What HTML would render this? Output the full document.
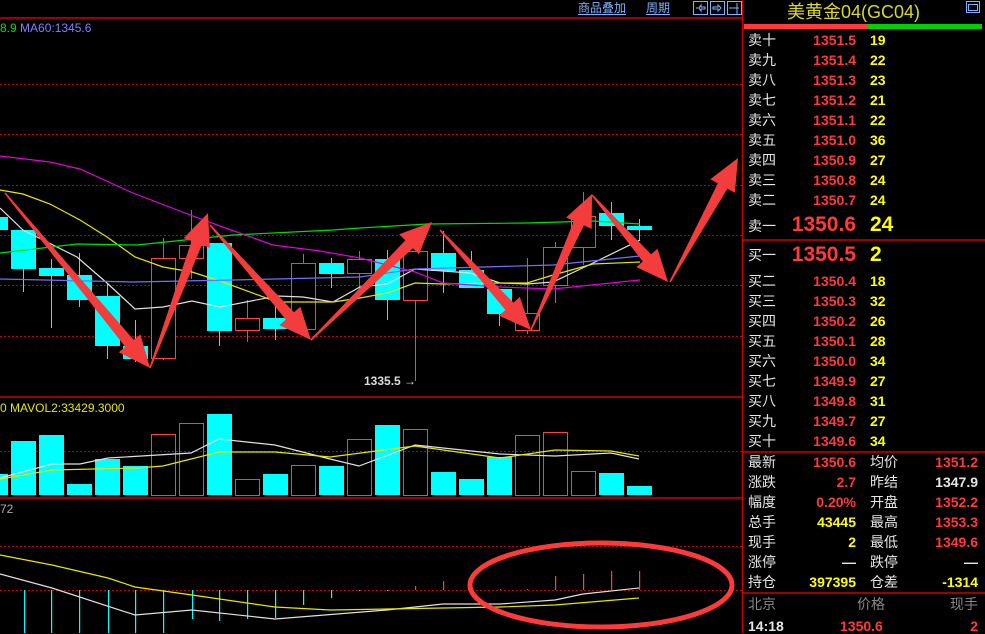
<!DOCTYPE html>
<html><head><meta charset="utf-8"><style>
body{margin:0;background:#000;width:985px;height:633px;overflow:hidden;position:relative;font-family:"Liberation Sans","Noto Sans CJK SC",sans-serif}
.t{position:absolute;white-space:nowrap;line-height:1}
.cn{font-size:14px;color:#e6e6e6}
.r{color:#ff3a3a}.y{color:#ffff00}.w{color:#e6e6e6}
.n{font-size:14px;font-weight:bold}
.ra{text-align:right}
</style></head><body>
<svg id="s" width="985" height="633" style="position:absolute;left:0;top:0">
<g stroke="#c00000" stroke-width="1" stroke-dasharray="2,2" fill="none">
<line x1="0" y1="84.5" x2="742" y2="84.5"/><line x1="0" y1="134.5" x2="742" y2="134.5"/><line x1="0" y1="185.5" x2="742" y2="185.5"/><line x1="0" y1="235.5" x2="742" y2="235.5"/><line x1="0" y1="285.5" x2="742" y2="285.5"/><line x1="0" y1="336.5" x2="742" y2="336.5"/>
<line x1="0" y1="451.5" x2="742" y2="451.5"/><line x1="0" y1="546.5" x2="742" y2="546.5"/><line x1="0" y1="590.5" x2="742" y2="590.5"/>
</g>
<g stroke="#d00000" stroke-width="1.5" fill="none">
<line x1="0" y1="18" x2="742" y2="18"/><line x1="0" y1="397" x2="742" y2="397"/><line x1="0" y1="498" x2="742" y2="498"/>
<line x1="742.5" y1="0" x2="742.5" y2="633"/>
<line x1="743" y1="240" x2="985" y2="240"/><line x1="743" y1="452" x2="985" y2="452"/><line x1="743" y1="593" x2="985" y2="593"/>
</g>
<g id="candles"></g>
<g fill="none" stroke-width="1.2">
<polyline stroke="#e0e0e0" points="0,208 23,230 77,257 107,283 135,309 163,307 192,301 220,307 277,296 303,297 333,302 360,287 387,284 415,269 443,271 470,273 500,283 527,284 553,282 593,263 640,240"/>
<polyline stroke="#e6e600" points="0,190 23,194 50,204 80,220 107,237 135,257 163,267 192,272 220,281 277,302 333,302 360,298 387,293 415,283 443,284 500,283 527,283 553,275 593,264 640,262"/>
<polyline stroke="#00e000" points="0,253 77,244 137,245 233,235 333,230 360,228 427,224 527,223 593,221 640,224"/>
<polyline stroke="#7070ff" points="0,279 133,282 233,280 360,277 415,269 553,265 640,256"/>
<polyline stroke="#e000e0" points="0,156 50,162 80,169 133,193 193,216 220,226 273,245 320,251 360,258 415,272 443,283 500,287 553,289 640,280"/>
<polyline stroke="#e0e0e0" points="0,478 52,464 80,464 108,458 191,453 219,439 275,445 330,459 359,466 415,445 500,454 555,456 611,453 639,459"/>
<polyline stroke="#e6e600" points="0,479 52,470 137,468 163,466 219,452 275,452 330,457 415,446 500,458 555,450 611,451 639,456"/>
<polyline stroke="#e0e0e0" points="0,574 52,588 135,615 192,610 275,619 387,610 443,604 500,604 555,600 583,594 639,588"/>
<polyline stroke="#e6e600" points="0,555 52,565 108,578 135,587 192,595 275,607 330,610 387,609 500,607 555,605 639,598"/>
</g>
<line x1="415.5" y1="300" x2="415.5" y2="381" stroke="#ff4040"/>
<g id="arrows" fill="#f33c3c"></g>
<ellipse cx="601" cy="585" rx="131" ry="42" fill="none" stroke="#ff3a3a" stroke-width="5"/>
<g fill="none" stroke="#7fb2ff" stroke-width="1">
<rect x="693.5" y="1.5" width="14" height="13"/><rect x="710.5" y="1.5" width="14" height="13"/><rect x="727.5" y="1.5" width="14" height="13"/>
<path d="M696 8h3l2-3v2h4v2h-4v2l-2-3M713 7h5v-2l3 3-3 3v-2h-5zM729 8h10M737 3v11"/>
<rect x="966.5" y="1.5" width="13" height="11"/><rect x="968.5" y="4.5" width="9" height="6"/>
</g>
<line x1="578" y1="14.5" x2="626" y2="14.5" stroke="#7fb2ff"/><line x1="646" y1="14.5" x2="670" y2="14.5" stroke="#7fb2ff"/>
</svg>
<div style="position:absolute;left:744px;top:24px;width:123px;height:5px;background:#ff3a3a"></div>
<div style="position:absolute;left:867px;top:24px;width:115px;height:5px;background:#00d000"></div>
<script>
var C=[[-9,'c',217,230,217,230],[1,'c',230,269,230,292],[2,'c',268,276,259,328],[3,'c',275,300,253,307],[4,'c',296,346,283,359],[5,'c',346,359,320,362],[6,'r',258,358,238,360],[7,'r',245,258,210,279],[8,'c',243,331,243,346],[9,'r',318,330,300,342],[10,'c',318,329,306,340],[11,'r',263,329,254,329],[12,'c',263,274,258,288],[13,'r',259,273,251,290],[14,'c',259,300,250,320],[15,'r',251,300,251,300],[16,'c',253,271,231,293],[17,'c',270,288,251,288],[18,'c',289,314,289,326],[19,'r',313,330,258,334],[20,'r',247,285,242,303],[21,'r',216,247,192,265],[22,'c',213,226,202,240],[23,'c',226,230,219,240]];
var V=[[0,'c',474],[1,'c',441],[2,'c',435],[3,'c',484],[4,'c',459],[5,'c',466],[6,'r',434],[7,'r',423],[8,'c',414],[9,'r',479],[10,'c',474],[11,'r',465],[12,'c',466],[13,'r',439],[14,'c',425],[15,'r',429],[16,'c',472],[17,'c',479],[18,'c',457],[19,'r',435],[20,'r',432],[21,'r',471],[22,'c',473],[23,'c',486]];
var h='';
function X(k){return 11+28*(k-1);}
C.forEach(function(c){var x=c[0]==-9?-17:X(c[0]),cx=x+12.5,col=c[1]=='c'?'#00ffff':'#ff4040';
h+='<line x1="'+cx+'" y1="'+c[4]+'" x2="'+cx+'" y2="'+c[5]+'" stroke="'+col+'"/>';
if(c[1]=='c')h+='<rect x="'+x+'" y="'+c[2]+'" width="25" height="'+Math.max(1,c[3]-c[2])+'" fill="#00ffff"/>';
else h+='<rect x="'+(x+.5)+'" y="'+(c[2]+.5)+'" width="24" height="'+(c[3]-c[2])+'" fill="#000" stroke="#ff4040"/>';});
V.forEach(function(v){var x=v[0]==0?-17:X(v[0]);
if(v[1]=='c')h+='<rect x="'+x+'" y="'+v[2]+'" width="25" height="'+(495-v[2])+'" fill="#00ffff"/>';
else h+='<rect x="'+(x+.5)+'" y="'+(v[2]+.5)+'" width="24" height="'+(495-v[2])+'" fill="none" stroke="#ff4040"/>';});
[[24,633],[51,633],[79,633],[108,633],[135,633],[163,633],[192,619],[219,621],[247,619],[275,618],[303,605],[331,598],[359,591],[387,591]].forEach(function(b){h+='<rect x="'+b[0]+'" y="590" width="1.2" height="'+(b[1]-590)+'" fill="#00ffff"/>';});
[[415,586],[443,581],[500,589],[527,589],[555,576],[583,574],[611,571],[639,571]].forEach(function(b){h+='<rect x="'+b[0]+'" y="'+b[1]+'" width="1.2" height="'+(590-b[1])+'" fill="#ff4040"/>';});
document.getElementById('candles').innerHTML=h;
var A=[[5,193,150,368],[150,368,208,213],[210,225,311,340],[311,340,432,222],[440,230,531,330],[531,330,592,194],[592,195,668,282],[670,282,738,158]],g='';
A.forEach(function(a){var dx=a[2]-a[0],dy=a[3]-a[1],L=Math.hypot(dx,dy),ux=dx/L,uy=dy/L,nx=-uy,ny=ux,hl=32,bx=a[2]-ux*hl,by=a[3]-uy*hl,w=5.5,H=14;
var p=[[a[0]+nx*.8,a[1]+ny*.8],[bx+nx*w,by+ny*w],[bx+nx*H,by+ny*H],[a[2],a[3]],[bx-nx*H,by-ny*H],[bx-nx*w,by-ny*w],[a[0]-nx*.8,a[1]-ny*.8]];
g+='<polygon points="'+p.map(function(q){return q[0].toFixed(1)+','+q[1].toFixed(1)}).join(' ')+'"/>';});
document.getElementById('arrows').innerHTML=g;
</script>
<div class="t" style="left:0;top:22px;font-size:12px"><span style="color:#00e000">8.9</span> <span style="color:#8080ff">MA60:1345.6</span></div>
<div class="t" style="left:0;top:402px;font-size:12px;color:#e6e600">0 MAVOL2:33429.3000</div>
<div class="t" style="left:0;top:503px;font-size:12px;color:#aaa">72</div>
<div class="t" style="left:364px;top:375px;font-size:12px;font-weight:bold;color:#ddd">1335.5 →</div>
<div class="t" style="left:578px;top:2px;font-size:12px;color:#7fb2ff">商品叠加</div>
<div class="t" style="left:646px;top:2px;font-size:12px;color:#7fb2ff">周期</div>
<div class="t" style="left:787px;top:3px;font-size:18px;color:#d8d830;font-family:'Liberation Sans','Noto Sans CJK SC',sans-serif">美黄金04(GC04)</div>
<div id="ob"></div>
<script>
var s='',lab=['卖十','卖九','卖八','卖七','卖六','卖五','卖四','卖三','卖二'],pr=['1351.5','1351.4','1351.3','1351.2','1351.1','1351.0','1350.9','1350.8','1350.7'],vo=['19','22','23','21','22','36','27','24','24'];
function row(y,l,p,v){s+='<div class="t cn" style="left:748px;top:'+y+'px">'+l+'</div><div class="t n r ra" style="right:129px;top:'+y+'px">'+p+'</div><div class="t n y" style="left:870px;top:'+y+'px">'+v+'</div>';}
for(var i=0;i<9;i++)row(33+20*i,lab[i],pr[i],vo[i]);
s+='<div class="t cn" style="left:748px;top:219px">卖一</div><div class="t r ra" style="right:129px;top:214px;font-size:21px;font-weight:bold">1350.6</div><div class="t y" style="left:870px;top:214px;font-size:21px;font-weight:bold">24</div>';
s+='<div class="t cn" style="left:748px;top:248px">买一</div><div class="t r ra" style="right:129px;top:244px;font-size:21px;font-weight:bold">1350.5</div><div class="t y" style="left:870px;top:244px;font-size:21px;font-weight:bold">2</div>';
var bl=['买二','买三','买四','买五','买六','买七','买八','买九','买十'],bp=['1350.4','1350.3','1350.2','1350.1','1350.0','1349.9','1349.8','1349.7','1349.6'],bv=['18','32','26','28','34','27','31','27','34'];
for(i=0;i<9;i++)row(274+20*i,bl[i],bp[i],bv[i]);
var st=[['最新','1350.6','r','均价','1351.2','r'],['涨跌','2.7','r','昨结','1347.9','w'],['幅度','0.20%','r','开盘','1352.2','r'],['总手','43445','y','最高','1353.3','r'],['现手','2','y','最低','1349.6','r'],['涨停','—','w','跌停','—','w'],['持仓','397395','y','仓差','-1314','y']];
st.forEach(function(r,i){var y=455+20*i;s+='<div class="t cn" style="left:748px;top:'+y+'px">'+r[0]+'</div><div class="t n ra '+r[2]+'" style="right:129px;top:'+y+'px">'+r[1]+'</div><div class="t cn" style="left:870px;top:'+y+'px">'+r[3]+'</div><div class="t n ra '+r[5]+'" style="right:7px;top:'+y+'px">'+r[4]+'</div>';});
s+='<div class="t cn" style="left:748px;top:597px;color:#888">北京</div><div class="t cn" style="left:857px;top:597px;color:#888">价格</div><div class="t cn" style="right:7px;top:597px;color:#888">现手</div>';
s+='<div class="t n w" style="left:748px;top:619px">14:18</div><div class="t n r" style="left:840px;top:619px">1350.6</div><div class="t n r ra" style="right:7px;top:619px">2</div>';
document.getElementById('ob').innerHTML=s;
</script>
</body></html>
